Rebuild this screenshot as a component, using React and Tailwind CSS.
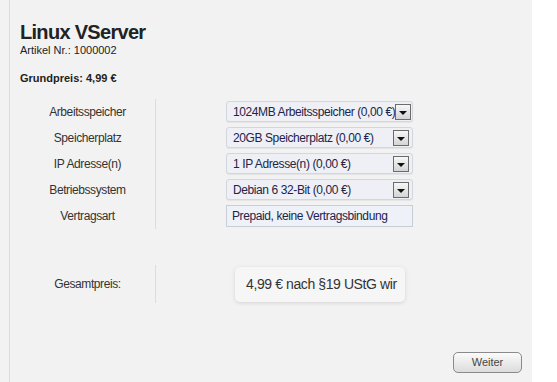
function Arrow() {
  return (
    <span className="flex h-[16px] w-[16px] shrink-0 items-end justify-center border border-[#6b6b6b] bg-gradient-to-b from-[#f7f7f7] to-[#d4d4d4] pb-[4px]">
      <span className="h-0 w-0 border-x-[4px] border-t-[4px] border-x-transparent border-t-[#111]" />
    </span>
  )
}

function SelectBox({ value }) {
  return (
    <div className="flex h-[21px] w-[187px] items-center justify-between rounded-[3px] border border-[#d3d6dc] bg-[#eef0f5] pl-[6px] pr-[3px] shadow-[0_1px_1px_rgba(0,0,0,0.06)]">
      <span className="whitespace-nowrap text-[12px] tracking-[-0.4px] text-[#23234a]">{value}</span>
      <Arrow />
    </div>
  )
}

const rows = [
  { label: 'Arbeitsspeicher', value: '1024MB Arbeitsspeicher (0,00 €)' },
  { label: 'Speicherplatz', value: '20GB Speicherplatz (0,00 €)' },
  { label: 'IP Adresse(n)', value: '1 IP Adresse(n) (0,00 €)' },
  { label: 'Betriebssystem', value: 'Debian 6 32-Bit (0,00 €)' },
]

export default function App() {
  return (
    <div className="flex h-[382px] w-full bg-white font-['Liberation_Sans',Arial,sans-serif]">
      <div className="h-full w-[532px] bg-[#f2f2f2] pl-[9px]">
        <div className="flex h-full flex-col border-l border-[#dcdcdc] pl-[10px]">
          {/* Header */}
          <h1 className="mt-[21px] text-[20px] font-bold leading-[23px] tracking-[-0.7px] text-[#222]">Linux VServer</h1>
          <p className="text-[11px] leading-[13px] text-[#222]">Artikel Nr.: 1000002</p>
          <p className="mt-[15px] text-[11px] font-bold leading-[13px] text-[#222]">Grundpreis: 4,99 €</p>

          {/* Options */}
          <div className="mt-[14px] flex">
            <div className="flex w-[136px] flex-col gap-[5px] border-r border-[#dcdcdc] py-[2px]">
              {rows.map((r) => (
                <div key={r.label} className="flex h-[21px] items-center justify-center text-[12px] tracking-[-0.4px] text-[#333]">
                  {r.label}
                </div>
              ))}
              <div className="flex h-[21px] items-center justify-center text-[12px] tracking-[-0.4px] text-[#333]">Vertragsart</div>
            </div>
            <div className="flex flex-col gap-[5px] py-[2px] pl-[70px]">
              {rows.map((r) => (
                <SelectBox key={r.label} value={r.value} />
              ))}
              <div className="flex h-[22px] w-[187px] items-center border border-[#c9cdd5] bg-[#eef1f7] pl-[5px] text-[12px] tracking-[-0.4px] text-[#23234a]">
                Prepaid, keine Vertragsbindung
              </div>
            </div>
          </div>

          {/* Total */}
          <div className="mt-[36px] flex">
            <div className="flex h-[38px] w-[136px] items-center justify-center border-r border-[#dcdcdc] text-[12px] tracking-[-0.4px] text-[#333]">
              Gesamtpreis:
            </div>
            <div className="ml-[79px] mt-[2px] flex h-[35px] w-[170px] items-center overflow-hidden whitespace-nowrap rounded-[5px] bg-[#f6f6f6] pl-[11px] text-[14px] tracking-[-0.4px] text-[#333] shadow-[0_1px_4px_rgba(0,0,0,0.12)]">
              4,99 € nach §19 UStG wir
            </div>
          </div>

          {/* Footer */}
          <div className="mt-auto mb-[9px] flex justify-end pr-[10px]">
            <button className="h-[21px] w-[69px] rounded-[5px] border border-[#8a8a8a] bg-gradient-to-b from-[#fbfbfb] to-[#dcdcdc] text-[11px] text-[#444]">
              Weiter
            </button>
          </div>
        </div>
      </div>
    </div>
  )
}
